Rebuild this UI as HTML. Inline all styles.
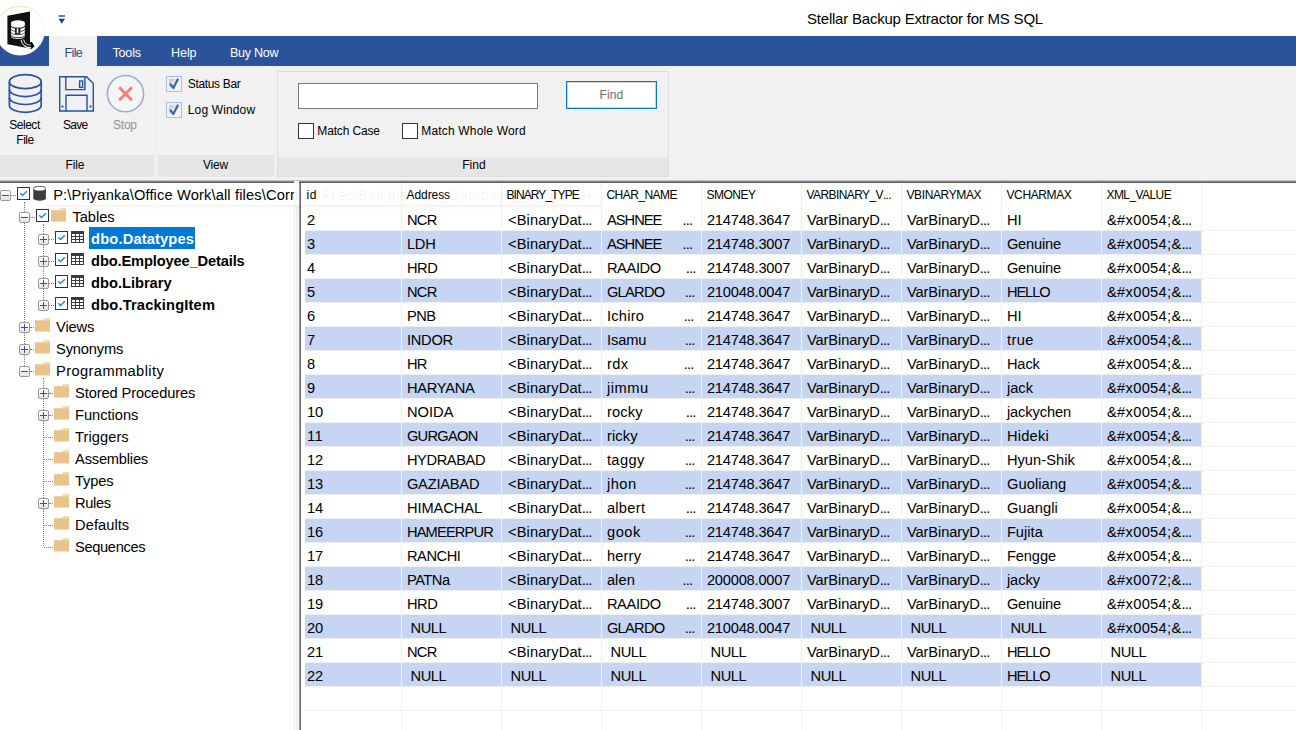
<!DOCTYPE html>
<html lang="en">
<head>
<meta charset="utf-8">
<title>Stellar Backup Extractor for MS SQL</title>
<style>
*{box-sizing:border-box;margin:0;padding:0}
html,body{width:1296px;height:730px;overflow:hidden;background:#fff}
body{position:relative;font-family:"Liberation Sans",Arial,sans-serif;color:#000}
.ab{position:absolute;display:block}
.t{position:absolute;white-space:pre;line-height:1;display:block}
#bluebar{left:0;top:36px;width:1296px;height:30px;background:#2b5399}
#ribbon{left:0;top:66px;width:1296px;height:112px;background:#f1f1f1}
#filetab{left:49px;top:36px;width:48px;height:32px;background:#f1f1f1}
.grp{position:absolute;top:70px;height:107px;border-radius:4px;background:#f1f1f1;overflow:hidden;box-shadow:inset 0 0 0 1px #f5f5f5}
.grp .cap{position:absolute;left:0;right:0;top:85px;height:22px;background:#e6e6e6}
#ribbot{left:0;top:180px;width:1296px;height:3px;background:linear-gradient(#e4e4e4,#8a8a8a 45%,#5c5c5c 80%,#777)}
#ribgap{left:0;top:177px;width:1296px;height:4px;background:#f1f1f1}
#logo{left:-5px;top:6px;width:50px;height:50px;border-radius:50%;background:#fff;border:1px solid #e8e2d0;box-shadow:0 0 1px rgba(120,110,70,.5)}
/* tree */
#tree{left:0;top:183px;width:294px;height:547px;background:#fff}
#split{left:294px;top:181px;width:5px;height:549px;background:linear-gradient(90deg,#ececec 0,#ececec 1px,#fbfbfb 1px,#fbfbfb 2px,#f0f0f0 2px)}
.exp{position:absolute;width:11px;height:11px;border:1px solid #9a9a9a;border-radius:2px;background:linear-gradient(#fff,#e4e4e4)}
.exp .h{position:absolute;left:1px;top:4px;width:7px;height:1px;background:#3a4f9a}
.exp .v{position:absolute;left:4px;top:1px;width:1px;height:7px;background:#3a4f9a}
.tchk{position:absolute;width:13px;height:13px;border:1px solid #333;background:#fff}
.tchk svg{position:absolute;left:0;top:0}
.dv{position:absolute;width:0;border-left:1px dotted #808080}
.dh{position:absolute;height:0;border-top:1px dotted #808080}
/* grid */
#grid{left:299px;top:183px;width:997px;height:547px;background:#fff;border-left:1px solid #a0a0a0;box-shadow:inset 1px 0 0 #666}
.band{position:absolute;left:305px;width:896px;height:23px;background:#c5d5f2}
.vl{position:absolute;top:183px;width:1px;height:547px;background:#efefef}
.hl{position:absolute;left:301px;width:995px;height:1px;background:#f0f0f0}
</style>
</head>
<body>
<!-- title bar -->
<div class="ab" id="bluebar"></div>
<div class="ab" id="ribbon"></div>
<div class="ab" id="filetab"></div>
<svg class="ab" style="left:-6px;top:4px" width="54" height="54" viewBox="-6 4 54 54">
  <defs><linearGradient id="lg" x1="0" y1="0" x2="0.6" y2="1"><stop offset="0" stop-color="#e3d28a"/><stop offset="0.45" stop-color="#ece8dc"/><stop offset="1" stop-color="#ffffff"/></linearGradient></defs>
  <circle cx="20" cy="30.6" r="24.4" fill="#fff" stroke="url(#lg)" stroke-width="0.9"/>
  <path d="M7.4 15.8 L30 11.4 L30 42.6 L31.8 41.7 L34.4 46.2 L31.4 49.1 L30 48.4 L7.4 44.3 Z" fill="#111"/>
  <path d="M11.1 22.6 L11.1 36.4 A6.85 2.5 0 0 0 24.8 36.4 L24.8 22.6 Z" fill="#fff"/>
  <ellipse cx="17.95" cy="22.6" rx="6.85" ry="2.3" fill="#fff"/>
  <path d="M11.1 26 A6.85 2.3 0 0 0 24.8 26" fill="none" stroke="#111" stroke-width="1"/>
  <path d="M11.1 29.3 A6.85 2.3 0 0 0 24.8 29.3 M11.1 32.4 A6.85 2.3 0 0 0 24.8 32.4" fill="none" stroke="#333" stroke-width="0.8"/>
  <path d="M11.1 35.4 A6.85 2.3 0 0 0 24.8 35.4" fill="none" stroke="#111" stroke-width="0.9"/>
  <rect x="15" y="27.8" width="5.4" height="6.6" fill="#222"/>
  <rect x="16.8" y="28.4" width="1.5" height="4.8" fill="#fff"/>
  <path d="M22.3 39.8 C23 44 26.5 46.6 31 46.6" fill="none" stroke="#fff" stroke-width="3.6"/>
  <path d="M22.3 39.6 C23 44 26.5 46.4 31.5 46.4" fill="none" stroke="#111" stroke-width="1.7"/>
  <path d="M31.2 41.9 L34.4 46.2 L31.2 49.2 Z" fill="#111"/>
</svg>
<!-- quick access arrow -->
<svg class="ab" style="left:58px;top:14px" width="8" height="11" viewBox="0 0 8 11">
  <rect x="0.5" y="1.2" width="6.5" height="1.6" fill="#3c62b0"/>
  <path d="M0.5 4.7 L7 4.7 L3.75 9.8 Z" fill="#1f3f99"/>
</svg>

<!-- ribbon groups -->
<div class="grp" style="left:-3px;width:157px"><div class="cap"></div></div>
<div class="grp" style="left:158px;width:116px"><div class="cap"></div></div>
<div class="grp" style="left:277px;top:71px;height:106px;width:392px;border-radius:0;box-shadow:inset 0 0 0 1px #dedede"><div class="cap" style="top:86px;left:1px;right:1px;height:19px"></div></div>
<div class="ab" id="ribgap"></div>
<div class="ab" id="ribbot"></div>

<!-- Select File icon -->
<svg class="ab" style="left:7px;top:73px" width="37" height="42" viewBox="0 0 37 42">
  <g fill="none" stroke="#2650a4" stroke-width="1.7">
    <ellipse cx="18.3" cy="8.7" rx="15.9" ry="7"/>
    <path d="M2.4 8.7 L2.4 32.3 A15.9 7 0 0 0 34.2 32.3 L34.2 8.7"/>
    <path d="M2.4 16.6 A15.9 7 0 0 0 34.2 16.6"/>
    <path d="M2.4 24.5 A15.9 7 0 0 0 34.2 24.5"/>
  </g>
</svg>
<!-- Save icon -->
<svg class="ab" style="left:58px;top:75px" width="38" height="38" viewBox="0 0 38 38">
  <g fill="none" stroke="#2650a4" stroke-width="1.4">
    <path d="M1.7 1.7 L28.5 1.7 L35.3 8.5 L35.3 36 L1.7 36 Z"/>
    <path d="M7.8 1.7 L7.8 14.6 L26.9 14.6 L26.9 1.7"/>
    <rect x="21.6" y="6" width="3" height="6.4"/>
    <path d="M8 36 L8 20.2 L29 20.2 L29 36"/>
  </g>
  <rect x="3.5" y="30.5" width="2" height="2" fill="#2650a4"/>
  <rect x="31.5" y="30.5" width="2" height="2" fill="#2650a4"/>
</svg>
<!-- Stop icon -->
<svg class="ab" style="left:105px;top:73px" width="42" height="42" viewBox="0 0 42 42">
  <circle cx="20.5" cy="20.7" r="18.1" fill="#f5f5f7" stroke="#9cabd4" stroke-width="1.5"/>
  <path d="M14.2 14.3 L27 27.3 M27 14.3 L14.2 27.3" stroke="#f47a7e" stroke-width="2.9" fill="none"/>
</svg>

<!-- view checkboxes -->
<div class="ab" style="left:166px;top:76px;width:16px;height:16px;border:1px solid #a9bee2;background:#edf1f8"></div><div class="ab" style="left:169px;top:79px;width:10px;height:10px;background:linear-gradient(135deg,#bfc5d0,#e4e7ec 45%,#fafbfc)"></div><svg class="ab" style="left:166px;top:76px" width="16" height="16" viewBox="0 0 16 16"><path d="M4.4 8.3 L7.4 12 L11.7 3.5" fill="none" stroke="#41669f" stroke-width="2.2" stroke-linecap="round" stroke-linejoin="round"/></svg>
<div class="ab" style="left:166px;top:102px;width:16px;height:16px;border:1px solid #a9bee2;background:#edf1f8"></div><div class="ab" style="left:169px;top:105px;width:10px;height:10px;background:linear-gradient(135deg,#bfc5d0,#e4e7ec 45%,#fafbfc)"></div><svg class="ab" style="left:166px;top:102px" width="16" height="16" viewBox="0 0 16 16"><path d="M4.4 8.3 L7.4 12 L11.7 3.5" fill="none" stroke="#41669f" stroke-width="2.2" stroke-linecap="round" stroke-linejoin="round"/></svg>

<!-- find controls -->
<div class="ab" style="left:298px;top:83px;width:240px;height:26px;border:1px solid #7a7a7a;background:#fff"></div>
<div class="ab" style="left:566px;top:81px;width:91px;height:28px;border:1px solid #0078d7;background:#fff;box-shadow:inset 0 0 0 1px #d6d2c8"></div>
<div class="ab" style="left:298px;top:123px;width:16px;height:16px;border:1px solid #333;background:#fff"></div>
<div class="ab" style="left:402px;top:123px;width:16px;height:16px;border:1px solid #333;background:#fff"></div>

<!-- tree panel -->
<div class="ab" id="split"></div>
<div class="ab" id="tree"></div>
<div class="dv" style="left:24px;top:202px;height:168px"></div>
<div class="dv" style="left:43px;top:224px;height:76px"></div>
<div class="dv" style="left:43px;top:378px;height:168px"></div>
<div class="dh" style="left:11px;top:195px;width:5px"></div>
<div class="dh" style="left:30px;top:217px;width:5px"></div>
<div class="dh" style="left:49px;top:239px;width:5px"></div>
<div class="dh" style="left:49px;top:261px;width:5px"></div>
<div class="dh" style="left:49px;top:283px;width:5px"></div>
<div class="dh" style="left:49px;top:305px;width:5px"></div>
<div class="dh" style="left:30px;top:327px;width:4px"></div>
<div class="dh" style="left:30px;top:349px;width:4px"></div>
<div class="dh" style="left:30px;top:371px;width:4px"></div>
<div class="dh" style="left:49px;top:393px;width:4px"></div>
<div class="dh" style="left:49px;top:415px;width:4px"></div>
<div class="dh" style="left:44px;top:437px;width:9px"></div>
<div class="dh" style="left:44px;top:459px;width:9px"></div>
<div class="dh" style="left:44px;top:481px;width:9px"></div>
<div class="dh" style="left:49px;top:503px;width:4px"></div>
<div class="dh" style="left:44px;top:525px;width:9px"></div>
<div class="dh" style="left:44px;top:547px;width:9px"></div>
<div class="ab" style="left:89px;top:227px;width:106px;height:22px;background:#0078d7"></div>
<div class="exp" style="left:0px;top:190px"><i class="h"></i></div><div class="tchk" style="left:17px;top:187px"><svg width="11" height="11" viewBox="0 0 11 11"><path d="M2.3 5.2 L4.5 7.6 L8.9 3.2" fill="none" stroke="#1c80e8" stroke-width="1.35"/></svg></div><svg class="ab" style="left:32.6px;top:186px" width="13.2" height="15" viewBox="0 0 14 15" preserveAspectRatio="none"><path d="M0.3 2.6 L0.3 12.2 A6.7 2.5 0 0 0 13.7 12.2 L13.7 2.6 Z" fill="#3d3d3d"/><ellipse cx="7" cy="2.7" rx="6.7" ry="2.4" fill="#fff" stroke="#3d3d3d" stroke-width="0.9"/></svg><div class="exp" style="left:19px;top:212px"><i class="h"></i></div><div class="tchk" style="left:36px;top:209px"><svg width="11" height="11" viewBox="0 0 11 11"><path d="M2.3 5.2 L4.5 7.6 L8.9 3.2" fill="none" stroke="#1c80e8" stroke-width="1.35"/></svg></div><svg class="ab" style="left:51px;top:208px" width="15.5" height="14" viewBox="0 0 16 14" preserveAspectRatio="none"><path d="M0 2.2 L8.2 2.2 L9.6 0.3 L15.2 0.3 L15.6 0.8 L15.6 13.6 L0 13.6 Z" fill="#e8c48a"/><path d="M9.6 0.3 L15.2 0.3 L15.6 0.8 L15.6 2.6 L8.2 2.6Z" fill="#f1dcb4"/></svg><div class="exp" style="left:38px;top:234px"><i class="h"></i><i class="v"></i></div><div class="tchk" style="left:55px;top:231px"><svg width="11" height="11" viewBox="0 0 11 11"><path d="M2.3 5.2 L4.5 7.6 L8.9 3.2" fill="none" stroke="#1c80e8" stroke-width="1.35"/></svg></div><svg class="ab" style="left:71px;top:231px" width="13" height="12" viewBox="0 0 13 12"><rect x="0" y="0" width="13" height="12" fill="#3b3b3b"/><g fill="#fff"><rect x="1" y="3" width="3" height="2"/><rect x="5" y="3" width="3" height="2"/><rect x="9" y="3" width="3" height="2"/><rect x="1" y="6" width="3" height="2"/><rect x="5" y="6" width="3" height="2"/><rect x="9" y="6" width="3" height="2"/><rect x="1" y="9" width="3" height="2"/><rect x="5" y="9" width="3" height="2"/><rect x="9" y="9" width="3" height="2"/></g></svg><div class="exp" style="left:38px;top:256px"><i class="h"></i><i class="v"></i></div><div class="tchk" style="left:55px;top:253px"><svg width="11" height="11" viewBox="0 0 11 11"><path d="M2.3 5.2 L4.5 7.6 L8.9 3.2" fill="none" stroke="#1c80e8" stroke-width="1.35"/></svg></div><svg class="ab" style="left:71px;top:253px" width="13" height="12" viewBox="0 0 13 12"><rect x="0" y="0" width="13" height="12" fill="#3b3b3b"/><g fill="#fff"><rect x="1" y="3" width="3" height="2"/><rect x="5" y="3" width="3" height="2"/><rect x="9" y="3" width="3" height="2"/><rect x="1" y="6" width="3" height="2"/><rect x="5" y="6" width="3" height="2"/><rect x="9" y="6" width="3" height="2"/><rect x="1" y="9" width="3" height="2"/><rect x="5" y="9" width="3" height="2"/><rect x="9" y="9" width="3" height="2"/></g></svg><div class="exp" style="left:38px;top:278px"><i class="h"></i><i class="v"></i></div><div class="tchk" style="left:55px;top:275px"><svg width="11" height="11" viewBox="0 0 11 11"><path d="M2.3 5.2 L4.5 7.6 L8.9 3.2" fill="none" stroke="#1c80e8" stroke-width="1.35"/></svg></div><svg class="ab" style="left:71px;top:275px" width="13" height="12" viewBox="0 0 13 12"><rect x="0" y="0" width="13" height="12" fill="#3b3b3b"/><g fill="#fff"><rect x="1" y="3" width="3" height="2"/><rect x="5" y="3" width="3" height="2"/><rect x="9" y="3" width="3" height="2"/><rect x="1" y="6" width="3" height="2"/><rect x="5" y="6" width="3" height="2"/><rect x="9" y="6" width="3" height="2"/><rect x="1" y="9" width="3" height="2"/><rect x="5" y="9" width="3" height="2"/><rect x="9" y="9" width="3" height="2"/></g></svg><div class="exp" style="left:38px;top:300px"><i class="h"></i><i class="v"></i></div><div class="tchk" style="left:55px;top:297px"><svg width="11" height="11" viewBox="0 0 11 11"><path d="M2.3 5.2 L4.5 7.6 L8.9 3.2" fill="none" stroke="#1c80e8" stroke-width="1.35"/></svg></div><svg class="ab" style="left:71px;top:297px" width="13" height="12" viewBox="0 0 13 12"><rect x="0" y="0" width="13" height="12" fill="#3b3b3b"/><g fill="#fff"><rect x="1" y="3" width="3" height="2"/><rect x="5" y="3" width="3" height="2"/><rect x="9" y="3" width="3" height="2"/><rect x="1" y="6" width="3" height="2"/><rect x="5" y="6" width="3" height="2"/><rect x="9" y="6" width="3" height="2"/><rect x="1" y="9" width="3" height="2"/><rect x="5" y="9" width="3" height="2"/><rect x="9" y="9" width="3" height="2"/></g></svg><div class="exp" style="left:19px;top:322px"><i class="h"></i><i class="v"></i></div><svg class="ab" style="left:34.5px;top:318px" width="15.5" height="14" viewBox="0 0 16 14" preserveAspectRatio="none"><path d="M0 2.2 L8.2 2.2 L9.6 0.3 L15.2 0.3 L15.6 0.8 L15.6 13.6 L0 13.6 Z" fill="#e8c48a"/><path d="M9.6 0.3 L15.2 0.3 L15.6 0.8 L15.6 2.6 L8.2 2.6Z" fill="#f1dcb4"/></svg><div class="exp" style="left:19px;top:344px"><i class="h"></i><i class="v"></i></div><svg class="ab" style="left:34.5px;top:340px" width="15.5" height="14" viewBox="0 0 16 14" preserveAspectRatio="none"><path d="M0 2.2 L8.2 2.2 L9.6 0.3 L15.2 0.3 L15.6 0.8 L15.6 13.6 L0 13.6 Z" fill="#e8c48a"/><path d="M9.6 0.3 L15.2 0.3 L15.6 0.8 L15.6 2.6 L8.2 2.6Z" fill="#f1dcb4"/></svg><div class="exp" style="left:19px;top:366px"><i class="h"></i></div><svg class="ab" style="left:34.5px;top:362px" width="15.5" height="14" viewBox="0 0 16 14" preserveAspectRatio="none"><path d="M0 2.2 L8.2 2.2 L9.6 0.3 L15.2 0.3 L15.6 0.8 L15.6 13.6 L0 13.6 Z" fill="#e8c48a"/><path d="M9.6 0.3 L15.2 0.3 L15.6 0.8 L15.6 2.6 L8.2 2.6Z" fill="#f1dcb4"/></svg><div class="exp" style="left:38px;top:388px"><i class="h"></i><i class="v"></i></div><svg class="ab" style="left:54px;top:384px" width="15.5" height="14" viewBox="0 0 16 14" preserveAspectRatio="none"><path d="M0 2.2 L8.2 2.2 L9.6 0.3 L15.2 0.3 L15.6 0.8 L15.6 13.6 L0 13.6 Z" fill="#e8c48a"/><path d="M9.6 0.3 L15.2 0.3 L15.6 0.8 L15.6 2.6 L8.2 2.6Z" fill="#f1dcb4"/></svg><div class="exp" style="left:38px;top:410px"><i class="h"></i><i class="v"></i></div><svg class="ab" style="left:54px;top:406px" width="15.5" height="14" viewBox="0 0 16 14" preserveAspectRatio="none"><path d="M0 2.2 L8.2 2.2 L9.6 0.3 L15.2 0.3 L15.6 0.8 L15.6 13.6 L0 13.6 Z" fill="#e8c48a"/><path d="M9.6 0.3 L15.2 0.3 L15.6 0.8 L15.6 2.6 L8.2 2.6Z" fill="#f1dcb4"/></svg><svg class="ab" style="left:54px;top:428px" width="15.5" height="14" viewBox="0 0 16 14" preserveAspectRatio="none"><path d="M0 2.2 L8.2 2.2 L9.6 0.3 L15.2 0.3 L15.6 0.8 L15.6 13.6 L0 13.6 Z" fill="#e8c48a"/><path d="M9.6 0.3 L15.2 0.3 L15.6 0.8 L15.6 2.6 L8.2 2.6Z" fill="#f1dcb4"/></svg><svg class="ab" style="left:54px;top:450px" width="15.5" height="14" viewBox="0 0 16 14" preserveAspectRatio="none"><path d="M0 2.2 L8.2 2.2 L9.6 0.3 L15.2 0.3 L15.6 0.8 L15.6 13.6 L0 13.6 Z" fill="#e8c48a"/><path d="M9.6 0.3 L15.2 0.3 L15.6 0.8 L15.6 2.6 L8.2 2.6Z" fill="#f1dcb4"/></svg><svg class="ab" style="left:54px;top:472px" width="15.5" height="14" viewBox="0 0 16 14" preserveAspectRatio="none"><path d="M0 2.2 L8.2 2.2 L9.6 0.3 L15.2 0.3 L15.6 0.8 L15.6 13.6 L0 13.6 Z" fill="#e8c48a"/><path d="M9.6 0.3 L15.2 0.3 L15.6 0.8 L15.6 2.6 L8.2 2.6Z" fill="#f1dcb4"/></svg><div class="exp" style="left:38px;top:498px"><i class="h"></i><i class="v"></i></div><svg class="ab" style="left:54px;top:494px" width="15.5" height="14" viewBox="0 0 16 14" preserveAspectRatio="none"><path d="M0 2.2 L8.2 2.2 L9.6 0.3 L15.2 0.3 L15.6 0.8 L15.6 13.6 L0 13.6 Z" fill="#e8c48a"/><path d="M9.6 0.3 L15.2 0.3 L15.6 0.8 L15.6 2.6 L8.2 2.6Z" fill="#f1dcb4"/></svg><svg class="ab" style="left:54px;top:516px" width="15.5" height="14" viewBox="0 0 16 14" preserveAspectRatio="none"><path d="M0 2.2 L8.2 2.2 L9.6 0.3 L15.2 0.3 L15.6 0.8 L15.6 13.6 L0 13.6 Z" fill="#e8c48a"/><path d="M9.6 0.3 L15.2 0.3 L15.6 0.8 L15.6 2.6 L8.2 2.6Z" fill="#f1dcb4"/></svg><svg class="ab" style="left:54px;top:538px" width="15.5" height="14" viewBox="0 0 16 14" preserveAspectRatio="none"><path d="M0 2.2 L8.2 2.2 L9.6 0.3 L15.2 0.3 L15.6 0.8 L15.6 13.6 L0 13.6 Z" fill="#e8c48a"/><path d="M9.6 0.3 L15.2 0.3 L15.6 0.8 L15.6 2.6 L8.2 2.6Z" fill="#f1dcb4"/></svg>

<div class="ab" style="left:47px;top:183px;width:252px;height:23px;background:rgba(255,255,255,.6)"></div>
<!-- grid -->
<div class="ab" id="grid"></div>
<div class="ab" style="left:47px;top:205px;width:554px;height:4px;background:linear-gradient(rgba(0,0,0,.05),rgba(0,0,0,0))"></div>
<div class="band" style="top:231px"></div><div class="band" style="top:279px"></div><div class="band" style="top:327px"></div><div class="band" style="top:375px"></div><div class="band" style="top:423px"></div><div class="band" style="top:471px"></div><div class="band" style="top:519px"></div><div class="band" style="top:567px"></div><div class="band" style="top:615px"></div><div class="band" style="top:663px"></div><div class="vl" style="left:401px"></div><div class="vl" style="left:501px"></div><div class="vl" style="left:601px"></div><div class="vl" style="left:701px"></div><div class="vl" style="left:801px"></div><div class="vl" style="left:901px"></div><div class="vl" style="left:1001px"></div><div class="vl" style="left:1101px"></div><div class="vl" style="left:1201px"></div><div class="hl" style="top:230px"></div><div class="hl" style="top:254px"></div><div class="hl" style="top:278px"></div><div class="hl" style="top:302px"></div><div class="hl" style="top:326px"></div><div class="hl" style="top:350px"></div><div class="hl" style="top:374px"></div><div class="hl" style="top:398px"></div><div class="hl" style="top:422px"></div><div class="hl" style="top:446px"></div><div class="hl" style="top:470px"></div><div class="hl" style="top:494px"></div><div class="hl" style="top:518px"></div><div class="hl" style="top:542px"></div><div class="hl" style="top:566px"></div><div class="hl" style="top:590px"></div><div class="hl" style="top:614px"></div><div class="hl" style="top:638px"></div><div class="hl" style="top:662px"></div><div class="hl" style="top:686px"></div><div class="hl" style="top:710px"></div><div class="hl" style="top:734px"></div><div class="hl" style="top:758px"></div>

<span class="t" style="left:807.0px;top:10.80px;font-size:15px;letter-spacing:-0.212px;">Stellar Backup Extractor for MS SQL</span>
<span class="t" style="left:64.5px;top:46.92px;font-size:12.5px;letter-spacing:-0.635px;color:#2b4a9a;">File</span>
<span class="t" style="left:112.5px;top:46.92px;font-size:12.5px;letter-spacing:-0.176px;color:#fff;">Tools</span>
<span class="t" style="left:171.0px;top:46.92px;font-size:12.5px;letter-spacing:-0.052px;color:#fff;">Help</span>
<span class="t" style="left:230.0px;top:46.92px;font-size:12.5px;letter-spacing:-0.245px;color:#fff;">Buy Now</span>
<span class="t" style="left:9.2px;top:118.84px;font-size:12px;letter-spacing:-0.459px;">Select</span>
<span class="t" style="left:16.3px;top:133.84px;font-size:12px;letter-spacing:-0.484px;">File</span>
<span class="t" style="left:63.0px;top:118.84px;font-size:12px;letter-spacing:-0.763px;">Save</span>
<span class="t" style="left:113.0px;top:118.84px;font-size:12px;letter-spacing:-0.221px;color:#919191;">Stop</span>
<span class="t" style="left:65.5px;top:158.84px;font-size:12px;letter-spacing:-0.099px;">File</span>
<span class="t" style="left:203.0px;top:158.84px;font-size:12px;letter-spacing:-0.248px;">View</span>
<span class="t" style="left:462.2px;top:158.84px;font-size:12px;letter-spacing:0.070px;">Find</span>
<span class="t" style="left:187.8px;top:77.84px;font-size:12px;letter-spacing:-0.343px;">Status Bar</span>
<span class="t" style="left:187.8px;top:103.84px;font-size:12px;letter-spacing:0.136px;">Log Window</span>
<span class="t" style="left:317.3px;top:124.84px;font-size:12px;letter-spacing:-0.154px;">Match Case</span>
<span class="t" style="left:421.3px;top:124.84px;font-size:12px;letter-spacing:0.172px;">Match Whole Word</span>
<span class="t" style="left:599.5px;top:88.84px;font-size:12px;letter-spacing:0.070px;color:#6d6d6d;">Find</span>
<span class="t" style="left:53.2px;top:187.58px;font-size:14.67px;letter-spacing:0.141px;width:241px;overflow:hidden;height:18px;">P:\Priyanka\Office Work\all files\Corrupt</span>
<span class="t" style="left:295.0px;top:187.58px;font-size:14.67px;letter-spacing:0.846px;color:rgba(0,0,0,.06);">upt</span>
<span class="t" style="left:322.3px;top:187.58px;font-size:14.67px;letter-spacing:0.143px;color:rgba(0,0,0,.06);">Files\Bak files\Sql_Database_log_go.bak</span>
<span class="t" style="left:72.4px;top:209.58px;font-size:14.67px;letter-spacing:-0.023px;">Tables</span>
<span class="t" style="left:91.1px;top:231.58px;font-size:14.67px;letter-spacing:0.155px;font-weight:700;color:#fff;">dbo.Datatypes</span>
<span class="t" style="left:91.1px;top:253.58px;font-size:14.67px;letter-spacing:-0.144px;font-weight:700;">dbo.Employee_Details</span>
<span class="t" style="left:91.1px;top:275.58px;font-size:14.67px;letter-spacing:-0.011px;font-weight:700;">dbo.Library</span>
<span class="t" style="left:91.1px;top:297.58px;font-size:14.67px;letter-spacing:0.166px;font-weight:700;">dbo.TrackingItem</span>
<span class="t" style="left:56.1px;top:319.58px;font-size:14.67px;letter-spacing:-0.138px;">Views</span>
<span class="t" style="left:56.1px;top:341.58px;font-size:14.67px;letter-spacing:-0.173px;">Synonyms</span>
<span class="t" style="left:56.1px;top:363.58px;font-size:14.67px;letter-spacing:0.384px;">Programmablity</span>
<span class="t" style="left:75.1px;top:385.58px;font-size:14.67px;letter-spacing:-0.124px;">Stored Procedures</span>
<span class="t" style="left:75.1px;top:407.58px;font-size:14.67px;letter-spacing:-0.037px;">Functions</span>
<span class="t" style="left:75.1px;top:429.58px;font-size:14.67px;letter-spacing:0.051px;">Triggers</span>
<span class="t" style="left:75.1px;top:451.58px;font-size:14.67px;letter-spacing:-0.207px;">Assemblies</span>
<span class="t" style="left:75.1px;top:473.58px;font-size:14.67px;letter-spacing:-0.164px;">Types</span>
<span class="t" style="left:75.1px;top:495.58px;font-size:14.67px;letter-spacing:-0.386px;">Rules</span>
<span class="t" style="left:75.1px;top:517.58px;font-size:14.67px;letter-spacing:0.039px;">Defaults</span>
<span class="t" style="left:75.1px;top:539.58px;font-size:14.67px;letter-spacing:-0.364px;">Sequences</span>
<span class="t" style="left:306.5px;top:189.24px;font-size:12px;letter-spacing:0.466px;">id</span>
<span class="t" style="left:406.5px;top:189.24px;font-size:12px;letter-spacing:-0.074px;">Address</span>
<span class="t" style="left:506.5px;top:189.24px;font-size:12px;letter-spacing:-0.925px;">BINARY_TYPE</span>
<span class="t" style="left:606.5px;top:189.24px;font-size:12px;letter-spacing:-0.548px;">CHAR_NAME</span>
<span class="t" style="left:706.5px;top:189.24px;font-size:12px;letter-spacing:-0.523px;">SMONEY</span>
<span class="t" style="left:806.5px;top:189.24px;font-size:12px;letter-spacing:-0.591px;">VARBINARY_V<span style="letter-spacing:-0.732px">...</span></span>
<span class="t" style="left:906.5px;top:189.24px;font-size:12px;letter-spacing:-0.381px;">VBINARYMAX</span>
<span class="t" style="left:1006.5px;top:189.24px;font-size:12px;letter-spacing:-0.385px;">VCHARMAX</span>
<span class="t" style="left:1106.5px;top:189.24px;font-size:12px;letter-spacing:-0.576px;">XML_VALUE</span>
<span class="t" style="left:306.9px;top:212.98px;font-size:14.67px;letter-spacing:0.057px;">2</span>
<span class="t" style="left:406.9px;top:212.98px;font-size:14.67px;letter-spacing:-0.638px;">NCR</span>
<span class="t" style="left:508.1px;top:212.98px;font-size:14.67px;letter-spacing:0.077px;">&lt;BinaryDat<span style="letter-spacing:-0.892px">...</span></span>
<span class="t" style="left:606.9px;top:212.98px;font-size:14.67px;letter-spacing:-0.965px;">ASHNEE</span>
<span class="t" style="left:706.9px;top:212.98px;font-size:14.67px;letter-spacing:-0.211px;">214748.3647</span>
<span class="t" style="left:806.9px;top:212.98px;font-size:14.67px;letter-spacing:-0.097px;">VarBinaryD<span style="letter-spacing:-0.892px">...</span></span>
<span class="t" style="left:906.9px;top:212.98px;font-size:14.67px;letter-spacing:-0.097px;">VarBinaryD<span style="letter-spacing:-0.892px">...</span></span>
<span class="t" style="left:1006.9px;top:212.98px;font-size:14.67px;letter-spacing:-0.019px;">HI</span>
<span class="t" style="left:1106.9px;top:212.98px;font-size:14.67px;letter-spacing:0.333px;">&amp;#x0054;&amp;<span style="letter-spacing:-0.892px">...</span></span>
<span class="t" style="left:682.5px;top:212.98px;font-size:14.67px;letter-spacing:-0.872px;">...</span>
<span class="t" style="left:306.9px;top:236.98px;font-size:14.67px;letter-spacing:0.057px;">3</span>
<span class="t" style="left:406.9px;top:236.98px;font-size:14.67px;letter-spacing:-0.240px;">LDH</span>
<span class="t" style="left:508.1px;top:236.98px;font-size:14.67px;letter-spacing:0.077px;">&lt;BinaryDat<span style="letter-spacing:-0.892px">...</span></span>
<span class="t" style="left:606.9px;top:236.98px;font-size:14.67px;letter-spacing:-0.965px;">ASHNEE</span>
<span class="t" style="left:706.9px;top:236.98px;font-size:14.67px;letter-spacing:-0.211px;">214748.3007</span>
<span class="t" style="left:806.9px;top:236.98px;font-size:14.67px;letter-spacing:-0.097px;">VarBinaryD<span style="letter-spacing:-0.892px">...</span></span>
<span class="t" style="left:906.9px;top:236.98px;font-size:14.67px;letter-spacing:-0.097px;">VarBinaryD<span style="letter-spacing:-0.892px">...</span></span>
<span class="t" style="left:1006.9px;top:236.98px;font-size:14.67px;letter-spacing:-0.189px;">Genuine</span>
<span class="t" style="left:1106.9px;top:236.98px;font-size:14.67px;letter-spacing:0.333px;">&amp;#x0054;&amp;<span style="letter-spacing:-0.892px">...</span></span>
<span class="t" style="left:682.5px;top:236.98px;font-size:14.67px;letter-spacing:-0.872px;">...</span>
<span class="t" style="left:306.9px;top:260.98px;font-size:14.67px;letter-spacing:0.057px;">4</span>
<span class="t" style="left:406.9px;top:260.98px;font-size:14.67px;letter-spacing:-0.423px;">HRD</span>
<span class="t" style="left:508.1px;top:260.98px;font-size:14.67px;letter-spacing:0.077px;">&lt;BinaryDat<span style="letter-spacing:-0.892px">...</span></span>
<span class="t" style="left:606.9px;top:260.98px;font-size:14.67px;letter-spacing:-0.373px;">RAAIDO</span>
<span class="t" style="left:706.9px;top:260.98px;font-size:14.67px;letter-spacing:-0.211px;">214748.3007</span>
<span class="t" style="left:806.9px;top:260.98px;font-size:14.67px;letter-spacing:-0.097px;">VarBinaryD<span style="letter-spacing:-0.892px">...</span></span>
<span class="t" style="left:906.9px;top:260.98px;font-size:14.67px;letter-spacing:-0.097px;">VarBinaryD<span style="letter-spacing:-0.892px">...</span></span>
<span class="t" style="left:1006.9px;top:260.98px;font-size:14.67px;letter-spacing:-0.189px;">Genuine</span>
<span class="t" style="left:1106.9px;top:260.98px;font-size:14.67px;letter-spacing:0.333px;">&amp;#x0054;&amp;<span style="letter-spacing:-0.892px">...</span></span>
<span class="t" style="left:685.8px;top:260.98px;font-size:14.67px;letter-spacing:-0.872px;">...</span>
<span class="t" style="left:306.9px;top:284.98px;font-size:14.67px;letter-spacing:0.057px;">5</span>
<span class="t" style="left:406.9px;top:284.98px;font-size:14.67px;letter-spacing:-0.638px;">NCR</span>
<span class="t" style="left:508.1px;top:284.98px;font-size:14.67px;letter-spacing:0.077px;">&lt;BinaryDat<span style="letter-spacing:-0.892px">...</span></span>
<span class="t" style="left:606.9px;top:284.98px;font-size:14.67px;letter-spacing:-0.724px;">GLARDO</span>
<span class="t" style="left:706.9px;top:284.98px;font-size:14.67px;letter-spacing:-0.211px;">210048.0047</span>
<span class="t" style="left:806.9px;top:284.98px;font-size:14.67px;letter-spacing:-0.097px;">VarBinaryD<span style="letter-spacing:-0.892px">...</span></span>
<span class="t" style="left:906.9px;top:284.98px;font-size:14.67px;letter-spacing:-0.097px;">VarBinaryD<span style="letter-spacing:-0.892px">...</span></span>
<span class="t" style="left:1006.9px;top:284.98px;font-size:14.67px;letter-spacing:-1.074px;">HELLO</span>
<span class="t" style="left:1106.9px;top:284.98px;font-size:14.67px;letter-spacing:0.333px;">&amp;#x0054;&amp;<span style="letter-spacing:-0.892px">...</span></span>
<span class="t" style="left:684.8px;top:284.98px;font-size:14.67px;letter-spacing:-0.872px;">...</span>
<span class="t" style="left:306.9px;top:308.98px;font-size:14.67px;letter-spacing:0.057px;">6</span>
<span class="t" style="left:406.9px;top:308.98px;font-size:14.67px;letter-spacing:-0.512px;">PNB</span>
<span class="t" style="left:508.1px;top:308.98px;font-size:14.67px;letter-spacing:0.077px;">&lt;BinaryDat<span style="letter-spacing:-0.892px">...</span></span>
<span class="t" style="left:606.9px;top:308.98px;font-size:14.67px;letter-spacing:0.233px;">Ichiro</span>
<span class="t" style="left:706.9px;top:308.98px;font-size:14.67px;letter-spacing:-0.211px;">214748.3647</span>
<span class="t" style="left:806.9px;top:308.98px;font-size:14.67px;letter-spacing:-0.097px;">VarBinaryD<span style="letter-spacing:-0.892px">...</span></span>
<span class="t" style="left:906.9px;top:308.98px;font-size:14.67px;letter-spacing:-0.097px;">VarBinaryD<span style="letter-spacing:-0.892px">...</span></span>
<span class="t" style="left:1006.9px;top:308.98px;font-size:14.67px;letter-spacing:-0.019px;">HI</span>
<span class="t" style="left:1106.9px;top:308.98px;font-size:14.67px;letter-spacing:0.333px;">&amp;#x0054;&amp;<span style="letter-spacing:-0.892px">...</span></span>
<span class="t" style="left:683.8px;top:308.98px;font-size:14.67px;letter-spacing:-0.872px;">...</span>
<span class="t" style="left:306.9px;top:332.98px;font-size:14.67px;letter-spacing:0.057px;">7</span>
<span class="t" style="left:406.9px;top:332.98px;font-size:14.67px;letter-spacing:-0.244px;">INDOR</span>
<span class="t" style="left:508.1px;top:332.98px;font-size:14.67px;letter-spacing:0.077px;">&lt;BinaryDat<span style="letter-spacing:-0.892px">...</span></span>
<span class="t" style="left:606.9px;top:332.98px;font-size:14.67px;letter-spacing:-0.070px;">Isamu</span>
<span class="t" style="left:706.9px;top:332.98px;font-size:14.67px;letter-spacing:-0.211px;">214748.3647</span>
<span class="t" style="left:806.9px;top:332.98px;font-size:14.67px;letter-spacing:-0.097px;">VarBinaryD<span style="letter-spacing:-0.892px">...</span></span>
<span class="t" style="left:906.9px;top:332.98px;font-size:14.67px;letter-spacing:-0.097px;">VarBinaryD<span style="letter-spacing:-0.892px">...</span></span>
<span class="t" style="left:1006.9px;top:332.98px;font-size:14.67px;letter-spacing:0.451px;">true</span>
<span class="t" style="left:1106.9px;top:332.98px;font-size:14.67px;letter-spacing:0.333px;">&amp;#x0054;&amp;<span style="letter-spacing:-0.892px">...</span></span>
<span class="t" style="left:684.8px;top:332.98px;font-size:14.67px;letter-spacing:-0.872px;">...</span>
<span class="t" style="left:306.9px;top:356.98px;font-size:14.67px;letter-spacing:0.057px;">8</span>
<span class="t" style="left:406.9px;top:356.98px;font-size:14.67px;letter-spacing:-0.836px;">HR</span>
<span class="t" style="left:508.1px;top:356.98px;font-size:14.67px;letter-spacing:0.077px;">&lt;BinaryDat<span style="letter-spacing:-0.892px">...</span></span>
<span class="t" style="left:606.9px;top:356.98px;font-size:14.67px;letter-spacing:0.371px;">rdx</span>
<span class="t" style="left:706.9px;top:356.98px;font-size:14.67px;letter-spacing:-0.211px;">214748.3647</span>
<span class="t" style="left:806.9px;top:356.98px;font-size:14.67px;letter-spacing:-0.097px;">VarBinaryD<span style="letter-spacing:-0.892px">...</span></span>
<span class="t" style="left:906.9px;top:356.98px;font-size:14.67px;letter-spacing:-0.097px;">VarBinaryD<span style="letter-spacing:-0.892px">...</span></span>
<span class="t" style="left:1006.9px;top:356.98px;font-size:14.67px;letter-spacing:-0.111px;">Hack</span>
<span class="t" style="left:1106.9px;top:356.98px;font-size:14.67px;letter-spacing:0.333px;">&amp;#x0054;&amp;<span style="letter-spacing:-0.892px">...</span></span>
<span class="t" style="left:683.8px;top:356.98px;font-size:14.67px;letter-spacing:-0.872px;">...</span>
<span class="t" style="left:306.9px;top:380.98px;font-size:14.67px;letter-spacing:0.057px;">9</span>
<span class="t" style="left:406.9px;top:380.98px;font-size:14.67px;letter-spacing:-0.262px;">HARYANA</span>
<span class="t" style="left:508.1px;top:380.98px;font-size:14.67px;letter-spacing:0.077px;">&lt;BinaryDat<span style="letter-spacing:-0.892px">...</span></span>
<span class="t" style="left:606.9px;top:380.98px;font-size:14.67px;letter-spacing:0.530px;">jimmu</span>
<span class="t" style="left:706.9px;top:380.98px;font-size:14.67px;letter-spacing:-0.211px;">214748.3647</span>
<span class="t" style="left:806.9px;top:380.98px;font-size:14.67px;letter-spacing:-0.097px;">VarBinaryD<span style="letter-spacing:-0.892px">...</span></span>
<span class="t" style="left:906.9px;top:380.98px;font-size:14.67px;letter-spacing:-0.097px;">VarBinaryD<span style="letter-spacing:-0.892px">...</span></span>
<span class="t" style="left:1006.9px;top:380.98px;font-size:14.67px;letter-spacing:0.005px;">jack</span>
<span class="t" style="left:1106.9px;top:380.98px;font-size:14.67px;letter-spacing:0.333px;">&amp;#x0054;&amp;<span style="letter-spacing:-0.892px">...</span></span>
<span class="t" style="left:684.8px;top:380.98px;font-size:14.67px;letter-spacing:-0.872px;">...</span>
<span class="t" style="left:306.9px;top:404.98px;font-size:14.67px;letter-spacing:-0.093px;">10</span>
<span class="t" style="left:406.9px;top:404.98px;font-size:14.67px;letter-spacing:0.054px;">NOIDA</span>
<span class="t" style="left:508.1px;top:404.98px;font-size:14.67px;letter-spacing:0.077px;">&lt;BinaryDat<span style="letter-spacing:-0.892px">...</span></span>
<span class="t" style="left:606.9px;top:404.98px;font-size:14.67px;letter-spacing:0.165px;">rocky</span>
<span class="t" style="left:706.9px;top:404.98px;font-size:14.67px;letter-spacing:-0.211px;">214748.3647</span>
<span class="t" style="left:806.9px;top:404.98px;font-size:14.67px;letter-spacing:-0.097px;">VarBinaryD<span style="letter-spacing:-0.892px">...</span></span>
<span class="t" style="left:906.9px;top:404.98px;font-size:14.67px;letter-spacing:-0.097px;">VarBinaryD<span style="letter-spacing:-0.892px">...</span></span>
<span class="t" style="left:1006.9px;top:404.98px;font-size:14.67px;letter-spacing:-0.105px;">jackychen</span>
<span class="t" style="left:1106.9px;top:404.98px;font-size:14.67px;letter-spacing:0.333px;">&amp;#x0054;&amp;<span style="letter-spacing:-0.892px">...</span></span>
<span class="t" style="left:685.8px;top:404.98px;font-size:14.67px;letter-spacing:-0.872px;">...</span>
<span class="t" style="left:306.9px;top:428.98px;font-size:14.67px;letter-spacing:0.451px;">11</span>
<span class="t" style="left:406.9px;top:428.98px;font-size:14.67px;letter-spacing:-0.707px;">GURGAON</span>
<span class="t" style="left:508.1px;top:428.98px;font-size:14.67px;letter-spacing:0.077px;">&lt;BinaryDat<span style="letter-spacing:-0.892px">...</span></span>
<span class="t" style="left:606.9px;top:428.98px;font-size:14.67px;letter-spacing:0.135px;">ricky</span>
<span class="t" style="left:706.9px;top:428.98px;font-size:14.67px;letter-spacing:-0.211px;">214748.3647</span>
<span class="t" style="left:806.9px;top:428.98px;font-size:14.67px;letter-spacing:-0.097px;">VarBinaryD<span style="letter-spacing:-0.892px">...</span></span>
<span class="t" style="left:906.9px;top:428.98px;font-size:14.67px;letter-spacing:-0.097px;">VarBinaryD<span style="letter-spacing:-0.892px">...</span></span>
<span class="t" style="left:1006.9px;top:428.98px;font-size:14.67px;letter-spacing:0.233px;">Hideki</span>
<span class="t" style="left:1106.9px;top:428.98px;font-size:14.67px;letter-spacing:0.333px;">&amp;#x0054;&amp;<span style="letter-spacing:-0.892px">...</span></span>
<span class="t" style="left:684.8px;top:428.98px;font-size:14.67px;letter-spacing:-0.872px;">...</span>
<span class="t" style="left:306.9px;top:452.98px;font-size:14.67px;letter-spacing:-0.093px;">12</span>
<span class="t" style="left:406.9px;top:452.98px;font-size:14.67px;letter-spacing:-0.403px;">HYDRABAD</span>
<span class="t" style="left:508.1px;top:452.98px;font-size:14.67px;letter-spacing:0.077px;">&lt;BinaryDat<span style="letter-spacing:-0.892px">...</span></span>
<span class="t" style="left:606.9px;top:452.98px;font-size:14.67px;letter-spacing:0.389px;">taggy</span>
<span class="t" style="left:706.9px;top:452.98px;font-size:14.67px;letter-spacing:-0.211px;">214748.3647</span>
<span class="t" style="left:806.9px;top:452.98px;font-size:14.67px;letter-spacing:-0.097px;">VarBinaryD<span style="letter-spacing:-0.892px">...</span></span>
<span class="t" style="left:906.9px;top:452.98px;font-size:14.67px;letter-spacing:-0.097px;">VarBinaryD<span style="letter-spacing:-0.892px">...</span></span>
<span class="t" style="left:1006.9px;top:452.98px;font-size:14.67px;letter-spacing:0.035px;">Hyun-Shik</span>
<span class="t" style="left:1106.9px;top:452.98px;font-size:14.67px;letter-spacing:0.333px;">&amp;#x0054;&amp;<span style="letter-spacing:-0.892px">...</span></span>
<span class="t" style="left:684.8px;top:452.98px;font-size:14.67px;letter-spacing:-0.872px;">...</span>
<span class="t" style="left:306.9px;top:476.98px;font-size:14.67px;letter-spacing:-0.093px;">13</span>
<span class="t" style="left:406.9px;top:476.98px;font-size:14.67px;letter-spacing:-0.212px;">GAZIABAD</span>
<span class="t" style="left:508.1px;top:476.98px;font-size:14.67px;letter-spacing:0.077px;">&lt;BinaryDat<span style="letter-spacing:-0.892px">...</span></span>
<span class="t" style="left:606.9px;top:476.98px;font-size:14.67px;letter-spacing:0.514px;">jhon</span>
<span class="t" style="left:706.9px;top:476.98px;font-size:14.67px;letter-spacing:-0.211px;">214748.3647</span>
<span class="t" style="left:806.9px;top:476.98px;font-size:14.67px;letter-spacing:-0.097px;">VarBinaryD<span style="letter-spacing:-0.892px">...</span></span>
<span class="t" style="left:906.9px;top:476.98px;font-size:14.67px;letter-spacing:-0.097px;">VarBinaryD<span style="letter-spacing:-0.892px">...</span></span>
<span class="t" style="left:1006.9px;top:476.98px;font-size:14.67px;letter-spacing:0.102px;">Guoliang</span>
<span class="t" style="left:1106.9px;top:476.98px;font-size:14.67px;letter-spacing:0.333px;">&amp;#x0054;&amp;<span style="letter-spacing:-0.892px">...</span></span>
<span class="t" style="left:684.8px;top:476.98px;font-size:14.67px;letter-spacing:-0.872px;">...</span>
<span class="t" style="left:306.9px;top:500.98px;font-size:14.67px;letter-spacing:-0.093px;">14</span>
<span class="t" style="left:406.9px;top:500.98px;font-size:14.67px;letter-spacing:-0.065px;">HIMACHAL</span>
<span class="t" style="left:508.1px;top:500.98px;font-size:14.67px;letter-spacing:0.077px;">&lt;BinaryDat<span style="letter-spacing:-0.892px">...</span></span>
<span class="t" style="left:606.9px;top:500.98px;font-size:14.67px;letter-spacing:0.288px;">albert</span>
<span class="t" style="left:706.9px;top:500.98px;font-size:14.67px;letter-spacing:-0.211px;">214748.3647</span>
<span class="t" style="left:806.9px;top:500.98px;font-size:14.67px;letter-spacing:-0.097px;">VarBinaryD<span style="letter-spacing:-0.892px">...</span></span>
<span class="t" style="left:906.9px;top:500.98px;font-size:14.67px;letter-spacing:-0.097px;">VarBinaryD<span style="letter-spacing:-0.892px">...</span></span>
<span class="t" style="left:1006.9px;top:500.98px;font-size:14.67px;letter-spacing:0.053px;">Guangli</span>
<span class="t" style="left:1106.9px;top:500.98px;font-size:14.67px;letter-spacing:0.333px;">&amp;#x0054;&amp;<span style="letter-spacing:-0.892px">...</span></span>
<span class="t" style="left:685.8px;top:500.98px;font-size:14.67px;letter-spacing:-0.872px;">...</span>
<span class="t" style="left:306.9px;top:524.98px;font-size:14.67px;letter-spacing:-0.093px;">16</span>
<span class="t" style="left:406.9px;top:524.98px;font-size:14.67px;letter-spacing:-0.834px;">HAMEERPUR</span>
<span class="t" style="left:508.1px;top:524.98px;font-size:14.67px;letter-spacing:0.077px;">&lt;BinaryDat<span style="letter-spacing:-0.892px">...</span></span>
<span class="t" style="left:606.9px;top:524.98px;font-size:14.67px;letter-spacing:0.585px;">gook</span>
<span class="t" style="left:706.9px;top:524.98px;font-size:14.67px;letter-spacing:-0.211px;">214748.3647</span>
<span class="t" style="left:806.9px;top:524.98px;font-size:14.67px;letter-spacing:-0.097px;">VarBinaryD<span style="letter-spacing:-0.892px">...</span></span>
<span class="t" style="left:906.9px;top:524.98px;font-size:14.67px;letter-spacing:-0.097px;">VarBinaryD<span style="letter-spacing:-0.892px">...</span></span>
<span class="t" style="left:1006.9px;top:524.98px;font-size:14.67px;letter-spacing:0.029px;">Fujita</span>
<span class="t" style="left:1106.9px;top:524.98px;font-size:14.67px;letter-spacing:0.333px;">&amp;#x0054;&amp;<span style="letter-spacing:-0.892px">...</span></span>
<span class="t" style="left:684.8px;top:524.98px;font-size:14.67px;letter-spacing:-0.872px;">...</span>
<span class="t" style="left:306.9px;top:548.98px;font-size:14.67px;letter-spacing:-0.093px;">17</span>
<span class="t" style="left:406.9px;top:548.98px;font-size:14.67px;letter-spacing:-0.427px;">RANCHI</span>
<span class="t" style="left:508.1px;top:548.98px;font-size:14.67px;letter-spacing:0.077px;">&lt;BinaryDat<span style="letter-spacing:-0.892px">...</span></span>
<span class="t" style="left:606.9px;top:548.98px;font-size:14.67px;letter-spacing:0.173px;">herry</span>
<span class="t" style="left:706.9px;top:548.98px;font-size:14.67px;letter-spacing:-0.211px;">214748.3647</span>
<span class="t" style="left:806.9px;top:548.98px;font-size:14.67px;letter-spacing:-0.097px;">VarBinaryD<span style="letter-spacing:-0.892px">...</span></span>
<span class="t" style="left:906.9px;top:548.98px;font-size:14.67px;letter-spacing:-0.097px;">VarBinaryD<span style="letter-spacing:-0.892px">...</span></span>
<span class="t" style="left:1006.9px;top:548.98px;font-size:14.67px;letter-spacing:-0.104px;">Fengge</span>
<span class="t" style="left:1106.9px;top:548.98px;font-size:14.67px;letter-spacing:0.333px;">&amp;#x0054;&amp;<span style="letter-spacing:-0.892px">...</span></span>
<span class="t" style="left:684.8px;top:548.98px;font-size:14.67px;letter-spacing:-0.872px;">...</span>
<span class="t" style="left:306.9px;top:572.98px;font-size:14.67px;letter-spacing:-0.093px;">18</span>
<span class="t" style="left:406.9px;top:572.98px;font-size:14.67px;letter-spacing:-0.452px;">PATNa</span>
<span class="t" style="left:508.1px;top:572.98px;font-size:14.67px;letter-spacing:0.077px;">&lt;BinaryDat<span style="letter-spacing:-0.892px">...</span></span>
<span class="t" style="left:606.9px;top:572.98px;font-size:14.67px;letter-spacing:0.072px;">alen</span>
<span class="t" style="left:706.9px;top:572.98px;font-size:14.67px;letter-spacing:-0.211px;">200008.0007</span>
<span class="t" style="left:806.9px;top:572.98px;font-size:14.67px;letter-spacing:-0.097px;">VarBinaryD<span style="letter-spacing:-0.892px">...</span></span>
<span class="t" style="left:906.9px;top:572.98px;font-size:14.67px;letter-spacing:-0.097px;">VarBinaryD<span style="letter-spacing:-0.892px">...</span></span>
<span class="t" style="left:1006.9px;top:572.98px;font-size:14.67px;letter-spacing:-0.046px;">jacky</span>
<span class="t" style="left:1106.9px;top:572.98px;font-size:14.67px;letter-spacing:0.333px;">&amp;#x0072;&amp;<span style="letter-spacing:-0.892px">...</span></span>
<span class="t" style="left:682.5px;top:572.98px;font-size:14.67px;letter-spacing:-0.872px;">...</span>
<span class="t" style="left:306.9px;top:596.98px;font-size:14.67px;letter-spacing:-0.093px;">19</span>
<span class="t" style="left:406.9px;top:596.98px;font-size:14.67px;letter-spacing:-0.423px;">HRD</span>
<span class="t" style="left:508.1px;top:596.98px;font-size:14.67px;letter-spacing:0.077px;">&lt;BinaryDat<span style="letter-spacing:-0.892px">...</span></span>
<span class="t" style="left:606.9px;top:596.98px;font-size:14.67px;letter-spacing:-0.373px;">RAAIDO</span>
<span class="t" style="left:706.9px;top:596.98px;font-size:14.67px;letter-spacing:-0.211px;">214748.3007</span>
<span class="t" style="left:806.9px;top:596.98px;font-size:14.67px;letter-spacing:-0.097px;">VarBinaryD<span style="letter-spacing:-0.892px">...</span></span>
<span class="t" style="left:906.9px;top:596.98px;font-size:14.67px;letter-spacing:-0.097px;">VarBinaryD<span style="letter-spacing:-0.892px">...</span></span>
<span class="t" style="left:1006.9px;top:596.98px;font-size:14.67px;letter-spacing:-0.189px;">Genuine</span>
<span class="t" style="left:1106.9px;top:596.98px;font-size:14.67px;letter-spacing:0.333px;">&amp;#x0054;&amp;<span style="letter-spacing:-0.892px">...</span></span>
<span class="t" style="left:685.8px;top:596.98px;font-size:14.67px;letter-spacing:-0.872px;">...</span>
<span class="t" style="left:306.9px;top:620.98px;font-size:14.67px;letter-spacing:-0.093px;">20</span>
<span class="t" style="left:410.5px;top:620.98px;font-size:14.67px;letter-spacing:-0.407px;">NULL</span>
<span class="t" style="left:510.5px;top:620.98px;font-size:14.67px;letter-spacing:-0.407px;">NULL</span>
<span class="t" style="left:606.9px;top:620.98px;font-size:14.67px;letter-spacing:-0.724px;">GLARDO</span>
<span class="t" style="left:706.9px;top:620.98px;font-size:14.67px;letter-spacing:-0.211px;">210048.0047</span>
<span class="t" style="left:810.5px;top:620.98px;font-size:14.67px;letter-spacing:-0.407px;">NULL</span>
<span class="t" style="left:910.5px;top:620.98px;font-size:14.67px;letter-spacing:-0.407px;">NULL</span>
<span class="t" style="left:1010.5px;top:620.98px;font-size:14.67px;letter-spacing:-0.407px;">NULL</span>
<span class="t" style="left:1106.9px;top:620.98px;font-size:14.67px;letter-spacing:0.333px;">&amp;#x0054;&amp;<span style="letter-spacing:-0.892px">...</span></span>
<span class="t" style="left:684.8px;top:620.98px;font-size:14.67px;letter-spacing:-0.872px;">...</span>
<span class="t" style="left:306.9px;top:644.98px;font-size:14.67px;letter-spacing:-0.093px;">21</span>
<span class="t" style="left:406.9px;top:644.98px;font-size:14.67px;letter-spacing:-0.638px;">NCR</span>
<span class="t" style="left:508.1px;top:644.98px;font-size:14.67px;letter-spacing:0.077px;">&lt;BinaryDat<span style="letter-spacing:-0.892px">...</span></span>
<span class="t" style="left:610.5px;top:644.98px;font-size:14.67px;letter-spacing:-0.407px;">NULL</span>
<span class="t" style="left:710.5px;top:644.98px;font-size:14.67px;letter-spacing:-0.407px;">NULL</span>
<span class="t" style="left:806.9px;top:644.98px;font-size:14.67px;letter-spacing:-0.097px;">VarBinaryD<span style="letter-spacing:-0.892px">...</span></span>
<span class="t" style="left:906.9px;top:644.98px;font-size:14.67px;letter-spacing:-0.097px;">VarBinaryD<span style="letter-spacing:-0.892px">...</span></span>
<span class="t" style="left:1006.9px;top:644.98px;font-size:14.67px;letter-spacing:-1.074px;">HELLO</span>
<span class="t" style="left:1110.5px;top:644.98px;font-size:14.67px;letter-spacing:-0.407px;">NULL</span>
<span class="t" style="left:306.9px;top:668.98px;font-size:14.67px;letter-spacing:-0.093px;">22</span>
<span class="t" style="left:410.5px;top:668.98px;font-size:14.67px;letter-spacing:-0.407px;">NULL</span>
<span class="t" style="left:510.5px;top:668.98px;font-size:14.67px;letter-spacing:-0.407px;">NULL</span>
<span class="t" style="left:610.5px;top:668.98px;font-size:14.67px;letter-spacing:-0.407px;">NULL</span>
<span class="t" style="left:710.5px;top:668.98px;font-size:14.67px;letter-spacing:-0.407px;">NULL</span>
<span class="t" style="left:810.5px;top:668.98px;font-size:14.67px;letter-spacing:-0.407px;">NULL</span>
<span class="t" style="left:910.5px;top:668.98px;font-size:14.67px;letter-spacing:-0.407px;">NULL</span>
<span class="t" style="left:1006.9px;top:668.98px;font-size:14.67px;letter-spacing:-1.074px;">HELLO</span>
<span class="t" style="left:1110.5px;top:668.98px;font-size:14.67px;letter-spacing:-0.407px;">NULL</span>
</body>
</html>
